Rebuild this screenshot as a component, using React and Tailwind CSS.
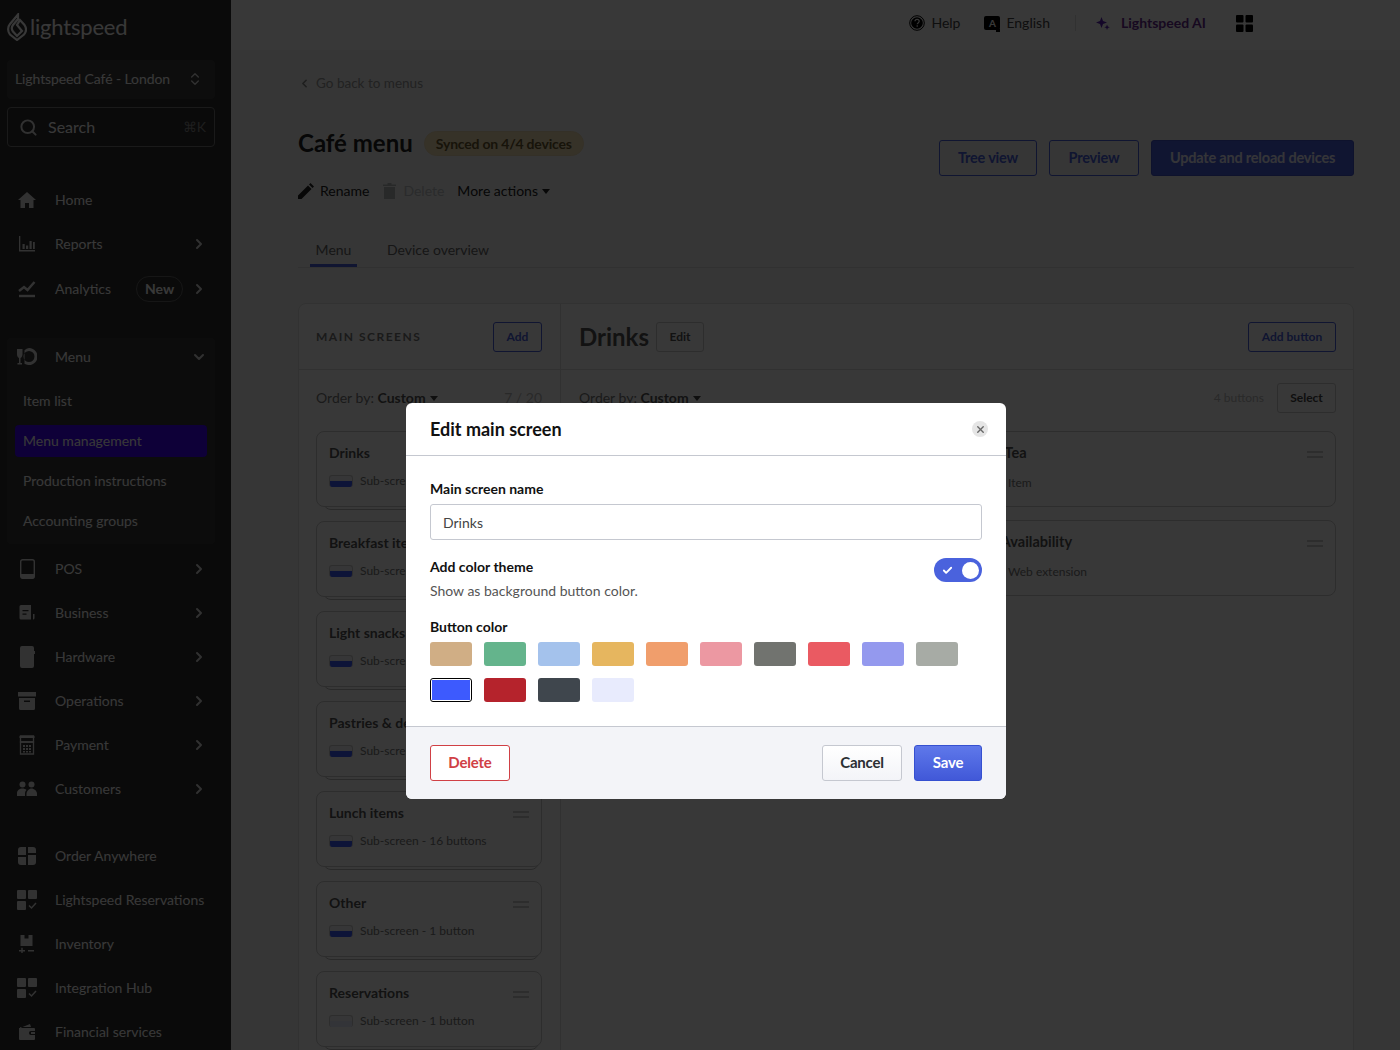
import { ChevronRight, ChevronDown, ChevronLeft, ChevronsUpDown, Search, Check, X } from 'lucide-react'

const MAIN_SCREENS = [
  { name: 'Drinks', sub: 'Sub-screen - 4 buttons', color: 'bg-[#3d5afe]' },
  { name: 'Breakfast items', sub: 'Sub-screen - 12 buttons', color: 'bg-[#3d5afe]' },
  { name: 'Light snacks', sub: 'Sub-screen - 9 buttons', color: 'bg-[#3d5afe]' },
  { name: 'Pastries & desserts', sub: 'Sub-screen - 8 buttons', color: 'bg-[#3d5afe]' },
  { name: 'Lunch items', sub: 'Sub-screen - 16 buttons', color: 'bg-[#3d5afe]' },
  { name: 'Other', sub: 'Sub-screen - 1 button', color: 'bg-[#3d5afe]' },
  { name: 'Reservations', sub: 'Sub-screen - 1 button', color: 'bg-[#e8ebfd]' },
]

const SWATCHES = ['bg-[#d0ae85]', 'bg-[#64b48c]', 'bg-[#a4c2ec]', 'bg-[#e6b65f]', 'bg-[#f09e6c]', 'bg-[#ec98a2]', 'bg-[#71736f]', 'bg-[#ea5a62]', 'bg-[#9499ee]', 'bg-[#a7aba5]']
const SWATCHES_2 = ['bg-[#b5232c]', 'bg-[#3f464d]', 'bg-[#e8ebfd]']

function HomeIcon() {
  return <svg width="20" height="18" viewBox="0 0 20 18" fill="currentColor"><path d="M10 1 1 9h2.500v8H8v-5h4v5h4.500V9H19z" /></svg>
}
function ReportsIcon() {
  return <svg width="18" height="16" viewBox="0 0 18 16" fill="currentColor"><path d="M1 0h1.300v14H17v1.500H1z" /><path d="M4.500 8h2.200v5H4.500zM8 9.500h2.200V13H8zM11.500 5h2.200v8h-2.200zM15 6h1.800v7H15z" /></svg>
}
function AnalyticsIcon() {
  return <svg width="18" height="18" viewBox="0 0 18 18" fill="none" stroke="currentColor" strokeWidth="2.400"><path d="M1 11 6 7l3.500 3L16.500 2" /><path d="M1 16h16" /></svg>
}
function MenuIcon() {
  return <svg width="20" height="18" viewBox="0 0 20 18" fill="currentColor"><path d="M0 1h5.500v5.500C5.500 8.500 4 9.800 3.500 10v5H5v1.500H.5V15H2v-5C1 9.500 0 8.500 0 6.500z" /><path fillRule="evenodd" d="M12 0a8.500 8.500 0 1 1-4.500 15.700V2.300A8.500 8.500 0 0 1 12 0m0 3a5.500 5.500 0 1 0 0 11 5.500 5.500 0 0 0 0-11" /></svg>
}
function PosIcon() {
  return <svg width="15" height="20" viewBox="0 0 15 20" fill="none"><rect x=".7" y=".7" width="13.600" height="18.600" rx="2" stroke="currentColor" strokeWidth="1.400" /><path d="M1 15h13v3a1.500 1.500 0 0 1-1.500 1.500h-10A1.500 1.500 0 0 1 1 18z" fill="currentColor" /></svg>
}
function BusinessIcon() {
  return <svg width="16" height="16" viewBox="0 0 16 16" fill="currentColor"><path fillRule="evenodd" d="M2 0h10v14.500H2A1.500 1.500 0 0 1 .5 13V1.500A1.500 1.500 0 0 1 2 0m1.500 5v1.300h6V5zm0 3.500v1.300h4V8.500z" /><path d="M14 9h1.500v4a1.500 1.500 0 0 1-1.500 1.500z" /></svg>
}
function HardwareIcon() {
  return <svg width="15" height="22" viewBox="0 0 15 22" fill="currentColor"><path d="M2 0h10a2 2 0 0 1 2 2v3h1v3h-1v12a2 2 0 0 1-2 2H2a2 2 0 0 1-2-2V2a2 2 0 0 1 2-2" /></svg>
}
function OperationsIcon() {
  return <svg width="20" height="20" viewBox="0 0 20 20" fill="currentColor"><path fillRule="evenodd" d="M1 1h18v4.500H1zm1 6h16v10.500a1.500 1.500 0 0 1-1.500 1.500h-13A1.500 1.500 0 0 1 2 17.500zm5 2.500V11h6V9.500z" /></svg>
}
function PaymentIcon() {
  return <svg width="16" height="20" viewBox="0 0 16 20" fill="none"><path d="M1.500 1h13v6h-13z" stroke="currentColor" strokeWidth="1.300" /><path d="M.5 1h15v2H.5z" fill="currentColor" /><path d="M1.500 7h13v12h-13z" stroke="currentColor" strokeWidth="1.300" /><path d="M4 10h2v2H4zm3 0h2v2H7zm3 0h2v2h-2zM4 13h2v2H4zm3 0h2v2H7zm3 0h2v2h-2zM4 16h2v1.500H4zm3 0h2v1.500H7zm3 0h2v1.500h-2z" fill="currentColor" /></svg>
}
function CustomersIcon() {
  return <svg width="20" height="16" viewBox="0 0 20 16" fill="currentColor"><circle cx="5.500" cy="3.500" r="3" /><circle cx="14.500" cy="3.500" r="3" /><path d="M0 15v-3c0-2.500 2.500-4.500 5.500-4.500 1.600 0 3 .5 4 1.500-1 1-1.500 2-1.500 3.500V15zM9.500 15v-2c0-3 2.500-5.500 5-5.500S20 10 20 12.500V15z" /></svg>
}
function OrderIcon() {
  return <svg width="20" height="20" viewBox="0 0 20 20" fill="currentColor"><path d="M4 1h5v8H1V4a3 3 0 0 1 3-3M11 1h5a3 3 0 0 1 3 3v3h-8zM1 11h8v8H4a3 3 0 0 1-3-3zM11 9h8v7a3 3 0 0 1-3 3h-5z" /></svg>
}
function GridCheckIcon() {
  return <svg width="20" height="20" viewBox="0 0 20 20" fill="currentColor"><rect width="9" height="9" rx="1" /><rect x="11" width="9" height="9" rx="1" /><rect y="11" width="9" height="9" rx="1" /><path d="m12 15.500 2.500 2.500L19 13" fill="none" stroke="currentColor" strokeWidth="1.500" /></svg>
}
function InventoryIcon() {
  return <svg width="16" height="18" viewBox="0 0 16 18" fill="currentColor"><path d="M1.500 0h4v3.500h4V0h4v11h-12z" /><path d="M0 15h6v1.400H0zM2.300 12.700h1.400v6H2.300zM9 15h6v1.400H9z" /></svg>
}
function WalletIcon() {
  return <svg width="18" height="18" viewBox="0 0 18 18" fill="currentColor"><path d="M2 5 12 1l1 3H2z" /><path fillRule="evenodd" d="M1 5h15a1 1 0 0 1 1 1v2h-4a2 2 0 0 0 0 4h4v4a1 1 0 0 1-1 1H2a1 1 0 0 1-1-1z" /><path d="M13 9h4v2h-4z" /></svg>
}

function NavItem({ icon, label, arrow, badge }) {
  return (
    <div className="flex h-[44px] shrink-0 items-center pl-[17px] pr-[24px] text-sm text-white">
      <span className="flex w-[20px] shrink-0 justify-center text-[#e3e3e3]">{icon}</span>
      <span className="ml-[18px] whitespace-nowrap">{label}</span>
      {badge && <span className="ml-[25px] flex h-[26px] w-[47px] items-center justify-center rounded-full border border-[#666] font-bold">{badge}</span>}
      {arrow && <ChevronRight size={16} strokeWidth={3} className="ml-auto shrink-0 text-[#ddd]" />}
    </div>
  )
}

function Divider({ className }) {
  return <div className={`ml-[15px] h-px w-[20px] bg-[#666] ${className}`} />
}

function Sidebar() {
  return (
    <aside className="flex h-[1050px] w-[231px] shrink-0 flex-col overflow-hidden bg-[#2d2d2d]">
      <div className="flex h-[54px] shrink-0 items-center pl-[7px] text-white">
        <svg width="20" height="28" viewBox="0 0 20 28" fill="none" stroke="currentColor" strokeWidth="2.200">
          <path d="M11 1.500 3 11c-2.500 3-2.500 7.500 0 10.500L10 27l7-5.500c2.500-3 2.500-6.500.5-9.500L13 7l-3 5 5 6-5 5-4-4.500c-1.500-2-1.500-4.500 0-6.500L11 6z" />
        </svg>
        <span className="ml-[3px] text-[22px] leading-none tracking-[-0.2px]">lightspeed</span>
      </div>
      <div className="ml-[7px] mr-[16px] mt-[6px] flex h-[39px] shrink-0 items-center justify-between rounded bg-[#3e3e3e] pb-[1px] pl-[8px] pr-[12px] text-sm tracking-[-0.1px] text-white">
        Lightspeed Café - London
        <ChevronsUpDown size={16} className="text-[#ddd]" />
      </div>
      <div className="ml-[7px] mr-[16px] mt-[8px] flex h-[40px] shrink-0 items-center rounded border border-[#777] pl-[11px] pr-[8px] text-white">
        <Search size={19} strokeWidth={2.500} className="text-[#ddd]" />
        <span className="ml-[10px] text-base">Search</span>
        <span className="ml-auto text-sm text-[#888]">⌘K</span>
      </div>
      <Divider className="mt-[16px]" />
      <div className="mt-[15px]">
        <NavItem icon={<HomeIcon />} label="Home" />
        <NavItem icon={<ReportsIcon />} label="Reports" arrow />
        <div className="pt-[1px]">
          <NavItem icon={<AnalyticsIcon />} label="Analytics" badge="New" arrow />
        </div>
      </div>
      <Divider className="mt-[10px]" />
      <div className="ml-[7px] mr-[16px] mt-[17px] h-[206px] shrink-0 rounded bg-[#3a3a3a] text-sm text-white">
        <div className="-mx-[7px] -mt-px">
          <div className="flex h-[40px] items-center pl-[17px] pr-[15px]">
            <span className="flex w-[20px] shrink-0 justify-center text-[#e3e3e3]"><MenuIcon /></span>
            <span className="ml-[18px]">Menu</span>
            <ChevronDown size={16} strokeWidth={3} className="ml-auto text-[#ddd]" />
          </div>
        </div>
        <div className="flex h-[48px] items-center pl-[16px]">Item list</div>
        <div className="mx-[8px] flex h-[32px] items-center rounded-sm bg-[#3f00ff] pl-[8px]">Menu management</div>
        <div className="flex h-[48px] items-center pl-[16px]">Production instructions</div>
        <div className="-mt-[8px] flex h-[48px] items-center pl-[16px]">Accounting groups</div>
      </div>
      <div className="mt-[3px]">
        <NavItem icon={<PosIcon />} label="POS" arrow />
        <NavItem icon={<BusinessIcon />} label="Business" arrow />
        <NavItem icon={<HardwareIcon />} label="Hardware" arrow />
        <NavItem icon={<OperationsIcon />} label="Operations" arrow />
        <NavItem icon={<PaymentIcon />} label="Payment" arrow />
        <NavItem icon={<CustomersIcon />} label="Customers" arrow />
      </div>
      <Divider className="mt-[10px]" />
      <div className="mt-[13px]">
        <NavItem icon={<OrderIcon />} label="Order Anywhere" />
        <NavItem icon={<GridCheckIcon />} label="Lightspeed Reservations" />
        <NavItem icon={<InventoryIcon />} label="Inventory" />
        <NavItem icon={<GridCheckIcon />} label="Integration Hub" />
        <NavItem icon={<WalletIcon />} label="Financial services" />
      </div>
    </aside>
  )
}

function TopBar() {
  return (
    <header className="flex h-[50px] shrink-0 items-center justify-end bg-white pb-[4px] pr-[147px] text-sm text-[#444]">
      <svg width="16" height="16" viewBox="0 0 16 16" className="text-black">
        <circle cx="8" cy="8" r="7.300" fill="none" stroke="currentColor" strokeWidth="1" />
        <circle cx="8" cy="8" r="5.800" fill="currentColor" />
        <path d="M6 6.300c0-2.600 4.200-2.600 4.200 0 0 1.700-2 1.500-2 3" fill="none" stroke="white" strokeWidth="1.200" />
        <circle cx="8.200" cy="11" r=".8" fill="white" />
      </svg>
      <span className="ml-[6px]">Help</span>
      <span className="relative ml-[24px] flex h-[14px] w-[16px] items-center justify-center rounded-[2px] bg-black text-[10px] font-bold leading-none text-white">
        A
        <span className="absolute -bottom-[2px] right-0 h-[3px] w-[4px] bg-black" />
      </span>
      <span className="ml-[6px]">English</span>
      <span className="ml-[25px] h-[16px] w-px bg-[#ddd]" />
      <svg width="14" height="14" viewBox="0 0 14 14" fill="#5b21b6" className="ml-[20px]">
        <path d="M5.500 1 7 5l4 1.500L7 8l-1.500 4L4 8 0 6.500 4 5zM11 8.500l.8 2 2 .8-2 .7-.8 2-.7-2-2-.7 2-.8z" />
      </svg>
      <span className="ml-[11px] font-bold text-[#6b2c94]">Lightspeed AI</span>
      <svg width="17" height="17" viewBox="0 0 17 17" fill="black" className="ml-[30px]">
        <rect width="7.500" height="7.500" rx="1" />
        <rect x="9.500" width="7.500" height="7.500" rx="1" />
        <rect y="9.500" width="7.500" height="7.500" rx="1" />
        <rect x="9.500" y="9.500" width="7.500" height="7.500" rx="1" />
      </svg>
    </header>
  )
}

function DragHandle() {
  return (
    <span className="absolute right-[12px] top-[19px] flex flex-col gap-[3px]">
      <span className="h-[2px] w-[16px] bg-[#ccc]" />
      <span className="h-[2px] w-[16px] bg-[#ccc]" />
    </span>
  )
}

function ScreenCard({ name, sub, color }) {
  return (
    <div className="relative h-[76px] shrink-0">
      <div className="absolute -bottom-[3px] left-[7px] right-[3px] h-[10px] rounded-b-lg border border-[#bbb]" />
      <div className="relative h-full rounded-lg border border-[#ccc] bg-white pl-[12px] pt-[11px]">
        <DragHandle />
        <p className="text-sm font-bold leading-[20px] text-[#555]">{name}</p>
        <div className="mt-[10px] flex items-center gap-[7px]">
          <span className="flex h-[12px] w-[24px] flex-col overflow-hidden rounded-[3px] border border-[#ccc] border-b-0 bg-[#f3f4f8]">
            <span className="h-[5px]" />
            <span className={`flex-1 ${color}`} />
          </span>
          <span className="whitespace-nowrap text-xs text-[#777]">{sub}</span>
        </div>
      </div>
    </div>
  )
}

function ButtonCard({ name, sub }) {
  return (
    <div className="relative h-[76px] rounded-lg border border-[#ccc] bg-white pl-[43px] pt-[11px]">
      <DragHandle />
      <p className="-ml-[31px] text-[14.500px] font-bold leading-[20px] text-[#555]">{name}</p>
      <p className="mt-[12px] text-xs text-[#777]">{sub}</p>
    </div>
  )
}

function Page() {
  return (
    <main className="min-w-0 flex-1 bg-[#f4f6f5] pl-[67px] pr-[46px] pt-[24px]">
      <div className="flex h-[18px] items-center gap-[5px] text-[13.500px] text-[#999]">
        <ChevronLeft size={13} strokeWidth={3} className="text-[#888]" /> Go back to menus
      </div>
      <div className="mt-[39px] flex items-start justify-between">
        <div>
          <div className="flex h-[25px] items-center">
            <h1 className="-mt-[2px] text-2xl font-bold text-[#222]">Café menu</h1>
            <span className="ml-[11px] flex h-[25px] w-[160px] items-center justify-center rounded-full border border-[#eedcb2] bg-[#f7e3b8] text-sm font-bold tracking-[-0.2px] text-[#6a5a30]">Synced on 4/4 devices</span>
          </div>
          <div className="mt-[25px] flex h-[20px] items-center text-sm text-[#222]">
            <svg width="16" height="16" viewBox="0 0 16 16" fill="#222"><path d="M0 16v-3.500L10 2.500 13.500 6 3.500 16zM11 1.500 12.500 0 16 3.500 14.500 5z" /></svg>
            <span className="ml-[6px]">Rename</span>
            <svg width="13" height="16" viewBox="0 0 13 16" fill="#b6b9bc" className="ml-[14px]"><path d="M4.500 0h4v1.500H13V3H0V1.500h4.500zM1 4h11v12H1z" /></svg>
            <span className="ml-[7px] text-[#c0c3c6]">Delete</span>
            <span className="ml-[13px]">More actions</span>
            <span className="ml-[4px] h-0 w-0 border-x-[4px] border-t-[5px] border-x-transparent border-t-[#222]" />
          </div>
        </div>
        <div className="mt-[9px] flex gap-[12px] text-[14.500px] font-bold tracking-[-0.2px]">
          <button className="h-[36px] w-[98px] rounded-[3px] border border-[#4a5fe0] pb-[1px] text-[#4a5fe0]">Tree view</button>
          <button className="h-[36px] w-[90px] rounded-[3px] border border-[#4a5fe0] pb-[1px] text-[#4a5fe0]">Preview</button>
          <button className="h-[36px] w-[203px] rounded-[3px] border border-[#3f51c8] bg-[#4a5fe0] pb-[1px] text-[#f0f2ff]">Update and reload devices</button>
        </div>
      </div>
      <div className="mt-[34px] flex h-[33px] border-b border-[#ddd] pl-[12px] text-sm">
        <div className="flex h-[32px] w-[47px] items-center justify-center border-b-[3px] border-[#4a5fe0] text-[#666]">Menu</div>
        <div className="ml-[30px] flex h-[32px] items-center pb-[3px] text-[#666]">Device overview</div>
      </div>
      <section className="mt-[35px] flex h-[900px] rounded-lg border border-[#e3e3e3] bg-white">
        <div className="w-[262px] shrink-0 border-r border-[#ddd]">
          <div className="flex h-[66px] items-center justify-between border-b border-[#ddd] pl-[17px] pr-[18px]">
            <span className="text-xs font-bold tracking-[1.500px] text-[#777]">MAIN SCREENS</span>
            <button className="h-[30px] w-[49px] rounded-[3px] border border-[#4a5fe0] text-xs font-bold text-[#4a5fe0]">Add</button>
          </div>
          <div className="pl-[17px] pr-[18px] pt-[19px]">
            <div className="flex h-[18px] items-center justify-between text-sm text-[#777]">
              <span className="flex items-center">
                Order by:&nbsp;<b className="text-[#555]">Custom</b>
                <span className="ml-[4px] h-0 w-0 border-x-[4px] border-t-[5px] border-x-transparent border-t-[#444]" />
              </span>
              <span className="text-[#bbb]">7 / 20</span>
            </div>
            <div className="mt-[24px] flex flex-col gap-[14px]">
              {MAIN_SCREENS.map(s => <ScreenCard key={s.name} {...s} />)}
            </div>
          </div>
        </div>
        <div className="min-w-0 flex-1">
          <div className="flex h-[66px] items-center border-b border-[#ddd] pl-[18px] pr-[17px]">
            <h2 className="text-2xl font-bold text-[#555]">Drinks</h2>
            <button className="ml-[7px] h-[30px] w-[48px] rounded-[3px] border border-[#ccc] text-xs font-bold text-[#555]">Edit</button>
            <button className="ml-auto h-[30px] w-[88px] rounded-[3px] border border-[#4a5fe0] text-xs font-bold text-[#4a5fe0]">Add button</button>
          </div>
          <div className="pl-[18px] pr-[17px] pt-[13px]">
            <div className="flex h-[30px] items-center text-sm text-[#777]">
              Order by:&nbsp;<b className="text-[#555]">Custom</b>
              <span className="ml-[4px] h-0 w-0 border-x-[4px] border-t-[5px] border-x-transparent border-t-[#444]" />
              <span className="ml-auto text-xs text-[#bbb]">4 buttons</span>
              <button className="ml-[13px] h-[30px] w-[59px] rounded-[3px] border border-[#ccc] text-xs font-bold text-[#444]">Select</button>
            </div>
            <div className="mt-[18px] grid grid-cols-2 gap-[13px]">
              <ButtonCard name="Coffee" sub="Item" />
              <ButtonCard name="Hot Tea" sub="Item" />
              <ButtonCard name="Espresso" sub="Item" />
              <ButtonCard name="My Availability" sub="Web extension" />
            </div>
          </div>
        </div>
      </section>
    </main>
  )
}

function EditModal() {
  return (
    <div className="absolute inset-0 bg-black/[.78]">
      <div className="absolute left-[406px] top-[403px] flex h-[396px] w-[600px] flex-col overflow-hidden rounded-md bg-white">
        <div className="flex h-[53px] shrink-0 items-center justify-between border-b border-[#c5c8d0] pl-[24px] pr-[18px]">
          <h3 className="text-lg font-bold text-[#111]">Edit main screen</h3>
          <span className="flex h-[16px] w-[16px] items-center justify-center rounded-full bg-[#e5e5e5]">
            <X size={11} strokeWidth={3} className="text-[#666]" />
          </span>
        </div>
        <div className="flex-1 px-[24px] pt-[23px]">
          <label className="block text-sm font-bold leading-[20px] text-[#111]">Main screen name</label>
          <div className="mt-[5px] flex h-[36px] items-center rounded-[3px] border border-[#c5c8d0] pl-[12px] pt-[2px] text-sm text-[#444]">Drinks</div>
          <div className="relative mt-[17px]">
            <p className="text-sm font-bold leading-[20px] text-[#111]">Add color theme</p>
            <p className="mt-[5px] text-sm leading-[18px] text-[#555]">Show as background button color.</p>
            <span className="absolute right-0 top-[1px] flex h-[24px] w-[48px] items-center justify-between rounded-full bg-[#4a62dd] pl-[8px] pr-[3px]">
              <Check size={11} strokeWidth={4} className="text-white" />
              <span className="h-[17px] w-[17px] rounded-full bg-white" />
            </span>
          </div>
          <p className="mt-[17px] text-sm font-bold leading-[20px] text-[#111]">Button color</p>
          <div className="mt-[5px] flex gap-[12px]">
            {SWATCHES.map(c => <span key={c} className={`h-[24px] w-[42px] rounded-[3px] ${c}`} />)}
          </div>
          <div className="mt-[12px] flex gap-[12px]">
            <span className="h-[24px] w-[42px] rounded-[3px] border border-black p-px">
              <span className="block h-full w-full bg-[#3d5afe]" />
            </span>
            {SWATCHES_2.map(c => <span key={c} className={`h-[24px] w-[42px] rounded-[3px] ${c}`} />)}
          </div>
        </div>
        <div className="flex h-[73px] shrink-0 items-center border-t border-[#c5c8d0] bg-[#f3f4f8] px-[24px]">
          <button className="h-[36px] w-[80px] rounded-[3px] border border-[#d04045] bg-white pb-[1px] text-[15px] font-bold tracking-[-0.2px] text-[#d04045]">Delete</button>
          <button className="ml-auto h-[36px] w-[80px] rounded-[3px] border border-[#c5c8d0] bg-gradient-to-b from-white to-[#f3f4f8] pb-[1px] text-[15px] font-bold tracking-[-0.2px] text-[#2b2f33]">Cancel</button>
          <button className="ml-[12px] h-[36px] w-[68px] rounded-[3px] border border-[#3550d0] bg-gradient-to-b from-[#5f78ea] to-[#4158d8] pb-[1px] text-[15px] font-bold tracking-[-0.2px] text-white">Save</button>
        </div>
      </div>
    </div>
  )
}

export default function App() {
  return (
    <div className="relative flex h-[1050px] w-[1400px] overflow-hidden font-['Lato',sans-serif]">
      <Sidebar />
      <div className="flex min-w-0 flex-1 flex-col overflow-hidden">
        <TopBar />
        <Page />
      </div>
      <EditModal />
    </div>
  )
}
